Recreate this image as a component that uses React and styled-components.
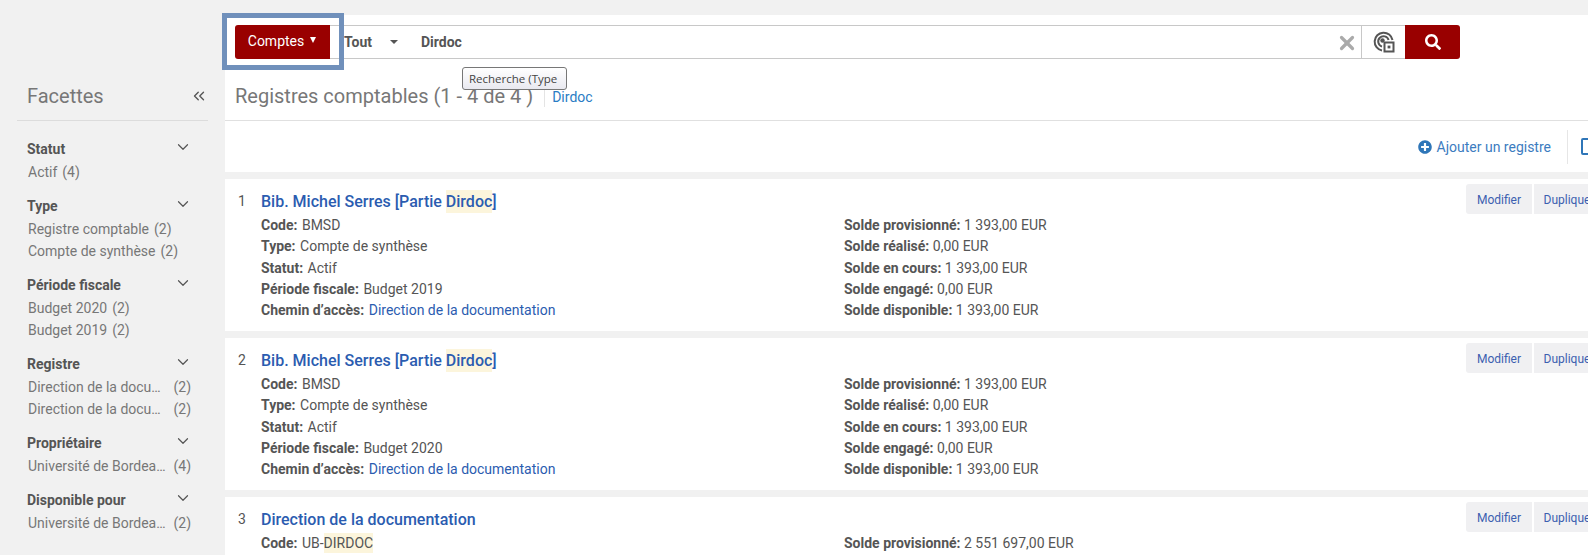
import React from "react";
import styled, { createGlobalStyle } from "styled-components";
import { ChevronDown, ChevronsLeft, X } from "lucide-react";
import { FaSearch, FaPlusCircle } from "react-icons/fa";

const facets = [
  { title: "Statut", items: [{ label: "Actif", count: 4 }] },
  {
    title: "Type",
    items: [
      { label: "Registre comptable", count: 2 },
      { label: "Compte de synthèse", count: 2 },
    ],
  },
  {
    title: "Période fiscale",
    items: [
      { label: "Budget 2020", count: 2 },
      { label: "Budget 2019", count: 2 },
    ],
  },
  {
    title: "Registre",
    cut: true,
    items: [
      { label: "Direction de la docu…", count: 2 },
      { label: "Direction de la docu…", count: 2 },
    ],
  },
  { title: "Propriétaire", cut: true, items: [{ label: "Université de Bordea…", count: 4 }] },
  { title: "Disponible pour", cut: true, items: [{ label: "Université de Bordea…", count: 2 }] },
];

const soldes = (a, b, c) => [
  ["Solde provisionné:", a],
  ["Solde réalisé:", b],
  ["Solde en cours:", c],
  ["Solde engagé:", b],
  ["Solde disponible:", c],
];

const records = [
  { n: 1, budget: "Budget 2019", right: soldes("1 393,00 EUR", "0,00 EUR", "1 393,00 EUR") },
  { n: 2, budget: "Budget 2020", right: soldes("1 393,00 EUR", "0,00 EUR", "1 393,00 EUR") },
];

const GlobalStyle = createGlobalStyle`
  html, body {
    margin: 0;
    height: 555px;
    overflow: hidden;
    background: #f1f1f1;
    font-family: Roboto, "Liberation Sans", sans-serif;
    font-size: 14px;
    color: #555;
  }
`;

const Page = styled.div`
  display: grid;
  grid-template-columns: 225px 1363px;
  height: 555px;
  overflow: hidden;
  position: relative;
`;

const Sidebar = styled.aside`
  padding: 80px 17px 0;
`;

const FacetHead = styled.div`
  display: flex;
  align-items: center;
  justify-content: space-between;
  box-sizing: border-box;
  height: 41px;
  padding: 0 0 8px 10px;
  border-bottom: 1px solid #dcdcdc;
  margin-bottom: 15px;
  font-size: 20px;
  color: #777;
  svg {
    color: #555;
  }
`;

const FacetGroup = styled.section`
  margin-bottom: 10px;
`;

const FacetTitle = styled.div`
  display: flex;
  align-items: center;
  justify-content: space-between;
  height: 25px;
  padding: 0 16px 0 10px;
  box-sizing: border-box;
  font-weight: 700;
  color: #555;
  svg {
    color: #555;
    margin-top: -4px;
  }
`;

const FacetItem = styled.div`
  display: flex;
  justify-content: ${(props) => (props.$cut ? "space-between" : "flex-start")};
  gap: 5px;
  height: 22px;
  line-height: 22px;
  padding: 0 17px 0 11px;
  color: #777;
`;

const Main = styled.main`
  margin-top: 15px;
  background: #f1f1f1;
  overflow: hidden;
`;

const Top = styled.div`
  background: #fff;
  box-sizing: border-box;
  height: 106px;
  border-bottom: 1px solid #e0e0e0;
  padding: 10px 0 0 10px;
`;

const SearchBar = styled.div`
  display: flex;
  align-items: stretch;
  width: 1225px;
  height: 34px;
`;

const ScopeButton = styled.button`
  width: 95px;
  border: 0;
  border-radius: 3px 0 0 3px;
  background: #990000;
  color: #fff;
  font: 14px Roboto, sans-serif;
  padding: 0 1px 3px 0;
`;

const ScopeCaret = styled.span`
  display: inline-block;
  width: 0;
  height: 0;
  margin-left: 6px;
  vertical-align: 3px;
  border-left: 3.5px solid transparent;
  border-right: 3.5px solid transparent;
  border-top: 6px solid #fff;
`;

const SearchField = styled.div`
  flex: 1;
  display: flex;
  align-items: center;
  border-top: 1px solid #c8c8c8;
  border-bottom: 1px solid #c8c8c8;
  font-weight: 700;
  padding-bottom: 1px;
`;

const ScopeText = styled.span`
  width: 46px;
  margin-left: 14px;
`;

const Caret = styled.span`
  width: 0;
  height: 0;
  border-left: 4px solid transparent;
  border-right: 4px solid transparent;
  border-top: 4px solid #555;
`;

const Query = styled.span`
  flex: 1;
  margin-left: 23px;
`;

const Clear = styled(X)`
  color: #aaa;
  margin-right: 3px;
  margin-top: 2px;
`;

const RadarBox = styled.div`
  width: 43px;
  display: flex;
  align-items: center;
  justify-content: center;
  border: 1px solid #c8c8c8;
  border-right: 0;
`;

const SearchButton = styled.button`
  width: 55px;
  border: 0;
  border-radius: 0 3px 3px 0;
  background: #990000;
  color: #fff;
  font-size: 16px;
  display: flex;
  align-items: center;
  justify-content: center;
`;

const TitleRow = styled.div`
  display: flex;
  align-items: center;
  margin-top: 24px;
  height: 25px;
`;

const Heading = styled.h1`
  margin: 0;
  font-size: 20px;
  font-weight: 400;
  color: #777;
`;

const Crumb = styled.a`
  margin-left: 11px;
  padding-left: 7px;
  border-left: 1px solid #e4e4e4;
  color: #2a7cc4;
  line-height: 20px;
  margin-top: 3px;
`;

const FocusRing = styled.div`
  position: absolute;
  left: 222px;
  top: 13px;
  width: 122px;
  height: 57px;
  box-sizing: border-box;
  border: 5px solid #7090bb;
`;

const Tooltip = styled.div`
  position: absolute;
  left: 462px;
  top: 67px;
  width: 105px;
  height: 23px;
  box-sizing: border-box;
  border: 1px solid #777;
  border-radius: 3px;
  background: linear-gradient(#fff, #e9e9f0);
  font: 11.5px/21px "Open Sans", sans-serif;
  color: #444;
  padding-left: 6px;
`;

const Toolbar = styled.div`
  background: #fff;
  height: 51px;
  display: flex;
  align-items: center;
  width: 1373px;
  margin-bottom: 7px;
`;

const AddLink = styled.a`
  margin-left: auto;
  display: flex;
  align-items: center;
  gap: 5px;
  color: #3c7cbf;
  svg {
    color: #2f76b8;
  }
`;

const ToolSep = styled.span`
  width: 1px;
  height: 34px;
  background: #e6e6e6;
  margin: 0 13px 0 16px;
`;

const SaveIcon = styled.span`
  width: 7px;
  height: 13px;
  margin-right: 6px;
  border: 2px solid #2f76b8;
  border-radius: 2px;
`;

const Card = styled.article`
  background: #fff;
  width: 1400px;
  height: 152px;
  margin-bottom: 7px;
  display: grid;
  grid-template-columns: 36px 583px 622px auto;
  align-items: start;
`;

const Num = styled.div`
  padding: 10px 0 0 13px;
  line-height: 25px;
  color: #555;
`;

const Details = styled.div`
  padding-top: 10px;
  b {
    margin-right: 1px;
  }
`;

const CardTitle = styled.a`
  display: block;
  height: 26px;
  line-height: 25px;
  font-size: 16px;
  font-weight: 500;
  color: #2b5cb0;
`;

const Row = styled.div`
  height: 21.3px;
  line-height: 21.3px;
  white-space: nowrap;
  b {
    font-weight: 700;
  }
`;

const RightCol = styled.div`
  padding-top: 36px;
`;

const Mark = styled.mark`
  background: #fcf5dc;
  color: inherit;
  padding: 2px 0;
`;

const PathLink = styled.a`
  color: #2b5cb0;
`;

const Actions = styled.div`
  display: flex;
  gap: 2px;
  padding-top: 5px;
`;

const ActionButton = styled.button`
  height: 30px;
  width: ${(props) => props.$w}px;
  flex: none;
  border: 0;
  border-radius: ${(props) => (props.$first ? "3px 0 0 3px" : "0")};
  background: #f0f0f2;
  color: #3c5fb0;
  font: 12px Roboto, sans-serif;
  padding: 2px 0 0;
`;

const Radar = () => (
  <svg width="22" height="22" viewBox="0 0 22 22" fill="none">
    <path
      d="M9 19.5A9 9 0 1 1 19.5 9M9 15.6A5.3 5.3 0 1 1 15.6 9"
      stroke="#555"
      strokeWidth="2"
    />
    <circle cx="9.5" cy="9.5" r="2.2" fill="#555" />
    <rect x="11.5" y="11.5" width="9" height="9" fill="#fff" stroke="#555" strokeWidth="2" />
    <rect x="14.6" y="14.6" width="2.8" height="2.8" fill="#555" />
  </svg>
);

const ActionGroup = () => (
  <Actions>
    <ActionButton $w={66} $first>
      Modifier
    </ActionButton>
    <ActionButton $w={70}>Dupliquer</ActionButton>
  </Actions>
);

const App = () => {
  return (
    <Page>
      <GlobalStyle />
      <Sidebar>
        <FacetHead>
          Facettes
          <ChevronsLeft size={18} strokeWidth={1.8} />
        </FacetHead>
        {facets.map((group) => (
          <FacetGroup key={group.title}>
            <FacetTitle>
              {group.title}
              <ChevronDown size={18} strokeWidth={1.6} />
            </FacetTitle>
            {group.items.map((item, i) => (
              <FacetItem $cut={group.cut} key={i}>
                <span>{item.label}</span>
                <span>({item.count})</span>
              </FacetItem>
            ))}
          </FacetGroup>
        ))}
      </Sidebar>
      <Main>
        <Top>
          <SearchBar>
            <ScopeButton>
              Comptes
              <ScopeCaret />
            </ScopeButton>
            <SearchField>
              <ScopeText>Tout</ScopeText>
              <Caret />
              <Query>Dirdoc</Query>
              <Clear size={22} strokeWidth={3.5} />
            </SearchField>
            <RadarBox>
              <Radar />
            </RadarBox>
            <SearchButton>
              <FaSearch />
            </SearchButton>
          </SearchBar>
          <TitleRow>
            <Heading>Registres comptables (1 - 4 de 4 )</Heading>
            <Crumb>Dirdoc</Crumb>
          </TitleRow>
        </Top>
        <Toolbar>
          <AddLink>
            <FaPlusCircle size={14} />
            Ajouter un registre
          </AddLink>
          <ToolSep />
          <SaveIcon />
        </Toolbar>
        {records.map((rec) => (
          <Card key={rec.n}>
            <Num>{rec.n}</Num>
            <Details>
              <CardTitle>
                Bib. Michel Serres [Partie <Mark>Dirdoc</Mark>]
              </CardTitle>
              <Row>
                <b>Code:</b> BMSD
              </Row>
              <Row>
                <b>Type:</b> Compte de synthèse
              </Row>
              <Row>
                <b>Statut:</b> Actif
              </Row>
              <Row>
                <b>Période fiscale:</b> {rec.budget}
              </Row>
              <Row>
                <b>Chemin d’accès:</b> <PathLink>Direction de la documentation</PathLink>
              </Row>
            </Details>
            <RightCol>
              {rec.right.map(([k, v]) => (
                <Row key={k}>
                  <b>{k}</b> {v}
                </Row>
              ))}
            </RightCol>
            <ActionGroup />
          </Card>
        ))}
        <Card>
          <Num>3</Num>
          <Details>
            <CardTitle>Direction de la documentation</CardTitle>
            <Row>
              <b>Code:</b> UB-<Mark>DIRDOC</Mark>
            </Row>
          </Details>
          <RightCol>
            <Row>
              <b>Solde provisionné:</b> 2 551 697,00 EUR
            </Row>
          </RightCol>
          <ActionGroup />
        </Card>
      </Main>
      <FocusRing />
      <Tooltip>Recherche (Type</Tooltip>
    </Page>
  );
};

export default App;
